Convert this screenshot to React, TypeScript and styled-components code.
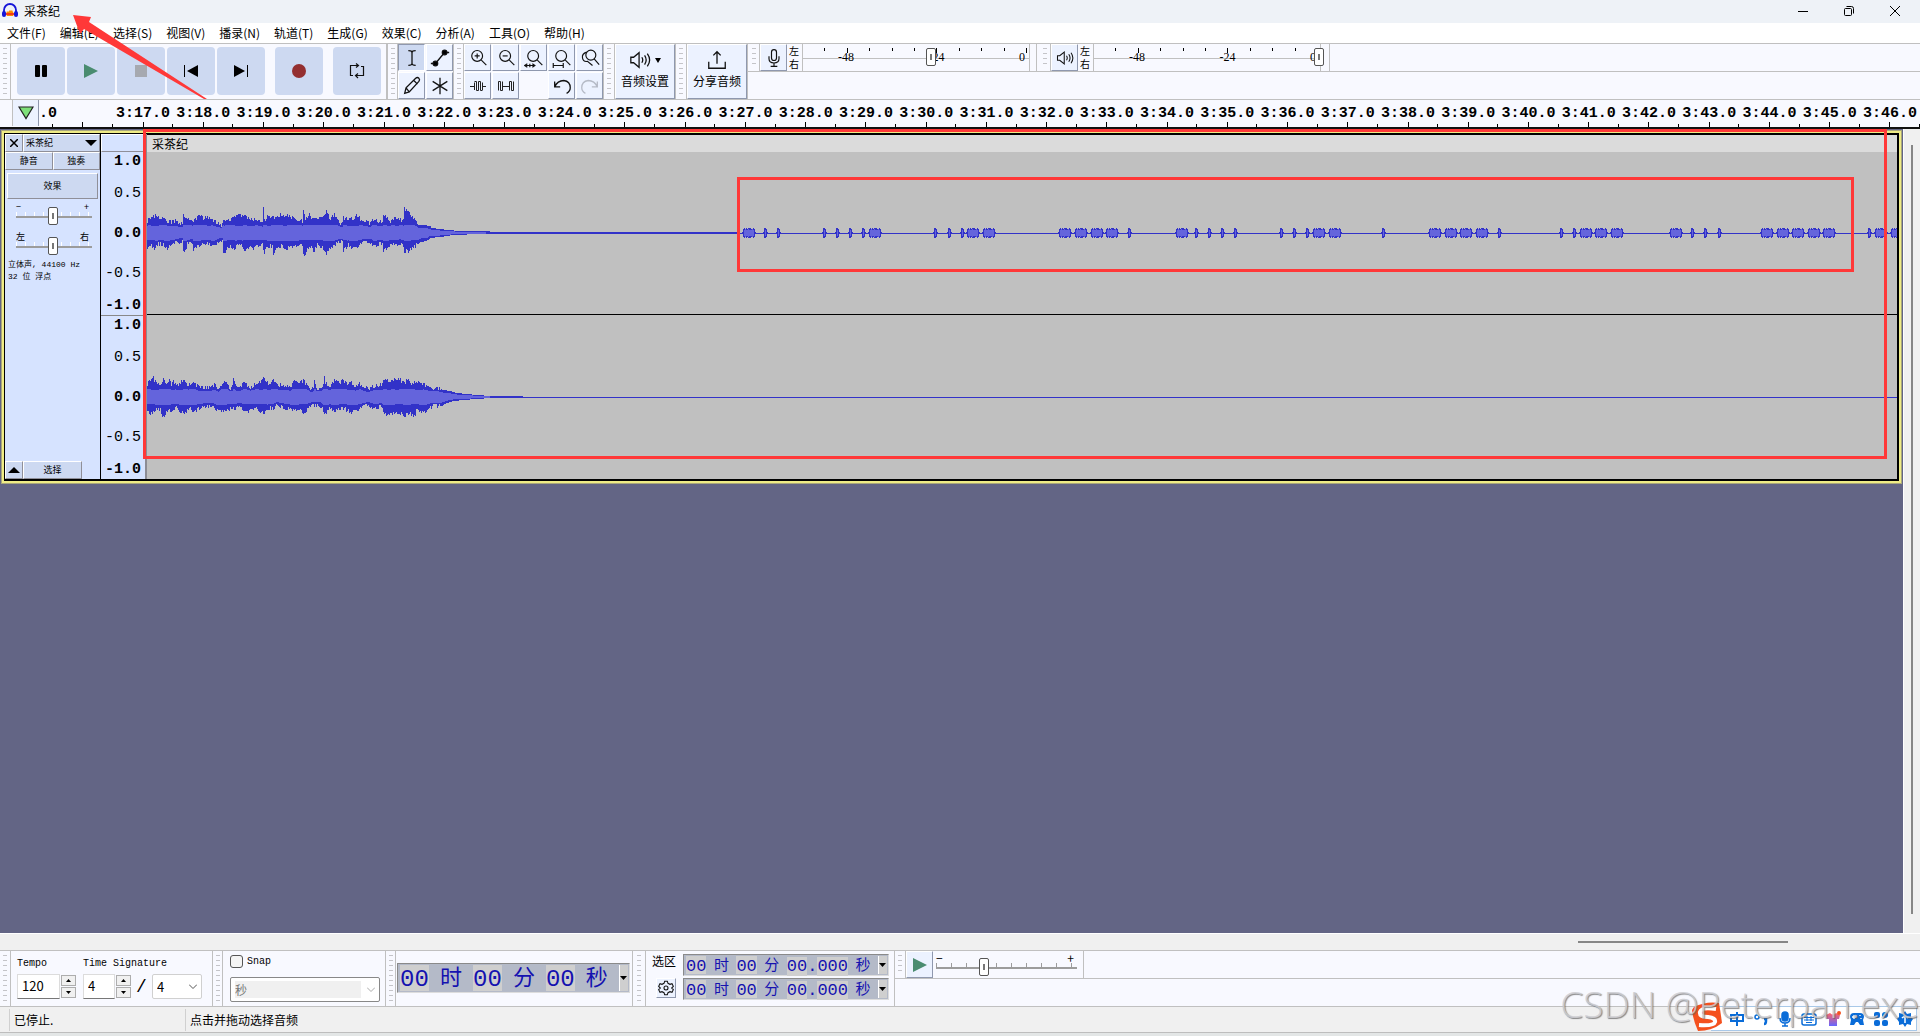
import React from 'react';
import styled, { createGlobalStyle, css } from 'styled-components';

const ui = "'Noto Sans CJK SC', sans-serif";
const mono = "'Liberation Mono', 'Noto Sans CJK SC', monospace";
const line = '#c0c0c0';
const surface = '#f8f9ff';
const red = '#ff3838';

const Global = createGlobalStyle`
  *, *::before, *::after { box-sizing: border-box; }
  body { margin: 0; overflow: hidden; background: #f0f0f0; }
  button, input, select { font: inherit; color: inherit; margin: 0; padding: 0; border: 0; border-radius: 0; }
`;

const Page = styled.div`
  position: relative;
  display: flex;
  flex-direction: column;
  height: 100vh;
  font: 12px/16px ${ui};
  color: #000;
`;

/* ---------- title and menus ---------- */
const TitleBar = styled.header`
  display: flex;
  align-items: center;
  gap: 6px;
  height: 23px;
  padding: 0 2px 2px;
  background: #eef2f7;
`;
const Title = styled.h1`
  flex: 1;
  margin: 0;
  font: 12px/16px ${ui};
`;
const WindowButtons = styled.div`
  display: flex;
`;
const WindowButton = styled.button`
  display: grid;
  place-items: center;
  width: 46px;
  height: 20px;
  background: none;
`;
const MenuBar = styled.nav`
  display: flex;
  gap: 14px;
  height: 20px;
  padding-left: 7px;
  background: #fff;
`;
const MenuItem = styled.button`
  background: none;
  line-height: 20px;
`;

/* ---------- toolbars ---------- */
const Dock = styled.div`
  display: flex;
  border-top: 1px solid ${line};
  border-bottom: 1px solid ${line};
  background: ${surface};
`;
const Bar = styled.section<{ $end?: number }>`
  display: flex;
  border-right: ${(p) => p.$end ?? 1}px solid ${line};
`;
const Grip = styled.div<{ $w?: number }>`
  flex: none;
  width: ${(p) => p.$w ?? 10}px;
  border-right: 1px solid ${line};
  background: repeating-linear-gradient(#c4c4c8 0 1px, transparent 1px 5px) center / 4px calc(100% - 8px) no-repeat;
`;
const Transport = styled.div`
  display: flex;
  gap: 10px;
  padding: 3px 5px 4px 6px;
`;
const Group = styled.div`
  display: flex;
  gap: 2px;
`;
const SoundMark = styled(Group)`
  gap: 4px;
`;
const BigButton = styled.button`
  display: grid;
  place-items: center;
  width: 48px;
  height: 48px;
  border-radius: 4px;
  background: #cdd9f1;
`;
const ToolGrid = styled.div<{ $cols: number }>`
  display: grid;
  grid-template-columns: repeat(${(p) => p.$cols}, 27px);
  grid-auto-rows: 27px;
  gap: 1px;
`;
const raised = css`
  background: #ecf2ff;
  border: 1px solid #fff;
  border-right: 1px solid #8f98ae;
  border-bottom: 1px solid #8f98ae;
`;
const ToolButton = styled.button<{ $on?: boolean }>`
  display: grid;
  place-items: center;
  width: 27px;
  height: 27px;
  ${raised}
  ${(p) => p.$on && 'background: #cdd9f1; border-color: #8f98ae #fff #fff #8f98ae;'}
`;
const TallButton = styled.button`
  display: flex;
  flex-direction: column;
  align-items: center;
  gap: 2px;
  width: 60px;
  height: 55px;
  padding-top: 4px;
  ${raised}
`;
const SideDock = styled.div`
  flex: 1;
`;
const SideRow = styled.div`
  display: flex;
  gap: 2px;
  height: 28px;
  border-bottom: 1px solid ${line};
`;
const Channels = styled.div`
  display: flex;
  flex-direction: column;
  width: 15px;
  padding-left: 2px;
  font: 10px/13px ${ui};
`;
const MeterScale = styled.div<{ $pad: number }>`
  position: relative;
  width: 228px;
  margin-right: ${(p) => p.$pad}px;
  border-left: 1px solid ${line};
  border-right: 1px solid ${line};
`;
const MeterTicks = styled.div`
  display: grid;
  grid-template-columns: repeat(10, 1fr);
  height: 15px;
  padding: 4px 2px 0 0;
  border-bottom: 1px solid ${line};
`;
const MeterTick = styled.i<{ $major: boolean }>`
  height: ${(p) => (p.$major ? 5 : 3)}px;
  border-right: 1px solid #000;
`;
const MeterLabels = styled.div`
  position: absolute;
  inset: 5px 0 auto 35px;
  display: flex;
  justify-content: space-between;
  padding-right: 4px;
  font: 12px/16px 'Liberation Serif', serif;
`;
const MeterRange = styled.input`
  position: absolute;
  inset: 4px auto auto 0;
  width: calc(100% + 4px);
  height: 18px;
  appearance: none;
  background: none;
  &::-webkit-slider-thumb {
    appearance: none;
    width: 10px;
    height: 18px;
    border: 1px solid #555;
    border-radius: 2px;
    background: linear-gradient(#777, #777) center / 2px 6px no-repeat #fff;
  }
`;

/* ---------- timeline ---------- */
const Timeline = styled.div`
  display: flex;
  height: 29px;
  background: ${surface};
  border-bottom: 2px solid #111;
`;
const TimelineHead = styled.div`
  display: flex;
  width: 113px;
  font: bold 15px/27px ${mono};
  background:
    linear-gradient(#000, #000) 52px 100% / 1px 3px no-repeat,
    linear-gradient(#000, #000) 82px 100% / 1px 5px no-repeat,
    linear-gradient(#000, #000) 112px 100% / 1px 3px no-repeat;
`;
const PinButton = styled.button`
  display: grid;
  place-items: center;
  width: 27px;
  height: 26px;
  margin-left: 12px;
  background: #ecf2ff;
  border-left: 1px solid ${line};
  border-right: 1px solid #8f98ae;
`;
const Second = styled.div`
  flex: 1;
  display: flex;
  justify-content: center;
  font: bold 15px/27px ${mono};
  background:
    linear-gradient(#000, #000) 50% 100% / 1px 5px no-repeat,
    linear-gradient(#000, #000) 100% 100% / 1px 3px no-repeat;
`;

/* ---------- track area ---------- */
const Workspace = styled.main`
  flex: 1;
  display: flex;
  min-height: 0;
`;
const TrackArea = styled.div`
  flex: 1;
  min-width: 0;
  padding: 1px;
  background: #636585;
`;
const VScroll = styled.div`
  width: 17px;
  padding: 16px 0 19px 7px;
  border-left: 1px solid #fff;
`;
const VThumb = styled.div`
  width: 2px;
  height: 100%;
  background: #868686;
`;
const HScroll = styled.div`
  height: 17px;
  padding: 7px 132px 0 0;
  border-top: 1px solid #fff;
`;
const HThumb = styled.div`
  width: 210px;
  height: 2px;
  margin-left: auto;
  background: #868686;
`;
const TrackFrame = styled.article`
  border: 1px solid #a9a77c;
  padding: 2px;
  background: #efec85;
`;
const Track = styled.div`
  display: flex;
  height: 348px;
  border: 1px solid #000;
  border-right-width: 2px;
  border-bottom-width: 2px;
  background: #d6e3ff;
`;
const Panel = styled.aside`
  display: flex;
  flex-direction: column;
  width: 96px;
  border-right: 1px solid #000;
  font: 9px/12px ${ui};
`;
const PanelRow = styled.div`
  display: flex;
  height: 18px;
`;
const PanelButton = styled.button<{ $w?: number }>`
  display: flex;
  align-items: center;
  justify-content: center;
  ${(p) => (p.$w ? `width: ${p.$w}px;` : 'flex: 1;')}
  height: 18px;
  background: #cdd9f1;
  border: 1px solid #fff;
  border-right-color: #8f8f98;
  border-bottom-color: #8f8f98;
`;
const NameButton = styled(PanelButton)`
  justify-content: space-between;
  padding: 0 2px;
`;
const EffectsButton = styled(PanelButton)`
  flex: none;
  height: 26px;
  margin: 3px 2px 4px;
`;
const SliderBlock = styled.label`
  display: block;
  height: 26px;
  padding: 0 8px 0 11px;
  & + & { margin-top: 4px; }
`;
const SliderEnds = styled.span`
  display: flex;
  justify-content: space-between;
  height: 4px;
  padding: 0 3px 0 0;
  line-height: 8px;
`;
const Slider = styled.input<{ $h?: number }>`
  display: block;
  width: 100%;
  height: 18px;
  appearance: none;
  background:
    linear-gradient(#9c9c9c, #9c9c9c) 0 9px / 100% 2px no-repeat,
    repeating-linear-gradient(90deg, ${(p) => (p.$h ? '#9c9c9c' : '#fff')} 0 1px, transparent 1px ${(p) => (p.$h ? 15 : 9)}px) 0 5px / 100% 4px no-repeat;
  &::-webkit-slider-thumb {
    appearance: none;
    width: 10px;
    height: 18px;
    border: 1px solid #555;
    border-radius: 2px;
    background: linear-gradient(#777, #777) center / 2px 6px no-repeat #fff;
  }
`;
const TrackInfo = styled.p`
  flex: 1;
  margin: 0;
  padding: 0 3px;
  font: 8px/12px ${mono};
  white-space: pre-line;
`;
const LevelRuler = styled.div`
  display: flex;
  flex-direction: column;
  width: 46px;
  border-right: 2px solid #8c8c94;
`;
const RulerHead = styled.div`
  height: 18px;
  border: 1px solid #fff;
  border-bottom-color: #8f8f98;
`;
const Scale = styled.ol`
  display: grid;
  grid-template-rows: 18px 46px 34px 46px 18px;
  align-items: center;
  justify-items: end;
  margin: 0;
  padding: 1px 4px 0 0;
  list-style: none;
  font: 15px/18px ${mono};
  & + & { border-top: 1px solid #888; }
`;
const Level = styled.li<{ $bold: boolean }>`
  font-weight: ${(p) => (p.$bold ? 700 : 400)};
`;
const Clip = styled.div`
  flex: 1;
  min-width: 0;
  display: flex;
  flex-direction: column;
  background: #c0c0c0;
`;
const ClipHead = styled.div`
  height: 18px;
  padding-left: 5px;
  border-top: 1px solid #000;
  background: #dbdbdb;
  font: 12px/18px ${ui};
`;
const Wave = styled.svg`
  display: block;
  width: 100%;
  height: 162px;
  & + & { border-top: 1px solid #000; height: 165px; }
`;

/* ---------- lower toolbars ---------- */
const Tempo = styled.div`
  display: grid;
  grid-template-columns: auto auto;
  grid-template-rows: 23px 25px;
  column-gap: 7px;
  padding: 0 10px 7px 6px;
`;
const SmallLabel = styled.label`
  font: 10px/26px ${mono};
`;
const Fields = styled.div`
  display: flex;
  gap: 1px;
`;
const Num = styled.input<{ $w: number }>`
  width: ${(p) => p.$w}px;
  height: 25px;
  padding: 0 0 2px 4px;
  border: 1px solid #dcdcdc;
  border-bottom-color: #777;
  background: #fff;
  font-size: 13px;
`;
const Spin = styled.div`
  display: grid;
  grid-template-rows: 11px 11px;
  gap: 1px;
  padding-top: 1px;
`;
const SpinButton = styled.button`
  display: grid;
  place-items: center;
  width: 15px;
  background: #f0f0f0;
  border: 1px solid #adadad;
`;
const Slash = styled.span`
  width: 19px;
  font: 18px/26px ${mono};
  text-align: center;
`;
const SelectBox = styled.div`
  position: relative;
  display: flex;
`;
const Chevron = styled.svg`
  position: absolute;
  right: 5px;
  top: 10px;
  pointer-events: none;
`;
const SigSelect = styled.select`
  width: 50px;
  height: 25px;
  padding-left: 4px;
  border: 1px solid #d0d0d0;
  border-radius: 2px;
  appearance: none;
  background: #fff;
  font-size: 13px;
`;
const Snap = styled.div`
  padding: 4px 5px 0 7px;
`;
const SnapLabel = styled.label`
  display: flex;
  align-items: center;
  gap: 4px;
  height: 13px;
  margin-bottom: 9px;
  font: 10px/13px ${mono};
`;
const Check = styled.input`
  appearance: none;
  width: 13px;
  height: 13px;
  border: 1px solid #555 !important;
  border-radius: 3px !important;
  background: #f4f4f4;
`;
const SnapSelect = styled.select`
  width: 150px;
  height: 25px;
  padding-left: 4px;
  border: 1px solid #888 !important;
  border-radius: 2px;
  appearance: none;
  background: linear-gradient(#f0f0f0, #f0f0f0) 4px center / 126px 17px no-repeat #fff;
  color: #777 !important;
  opacity: 1 !important;
`;
const TimeBox = styled.div<{ $big?: boolean }>`
  display: flex;
  align-items: stretch;
  justify-content: space-between;
  width: ${(p) => (p.$big ? 233 : 206)}px;
  height: ${(p) => (p.$big ? 30 : 22)}px;
  padding: 1px 1px 1px 2px;
  border: 1px solid #8a8a8a;
  border-right-color: #ddd;
  border-bottom-color: #ddd;
  background: #b4bac8;
  color: #1512b0;
  font: ${(p) => (p.$big ? '24px/30px' : '17px/21px')} ${mono};
`;
const Digits = styled.span`
  background: #cfcfcf;
`;
const Unit = styled.span<{ $big?: boolean }>`
  font-size: ${(p) => (p.$big ? 22 : 15)}px;
`;
const Drop = styled.button`
  display: grid;
  place-items: center;
  width: 9px;
  background: #cfcfcf;
  border-left: 1px solid #fff;
`;
const BigTime = styled.div`
  padding: 12px 2px 0 1px;
`;
const Selection = styled.div`
  display: grid;
  grid-template-columns: 31px 206px;
  grid-template-rows: 22px 22px;
  row-gap: 2px;
  padding: 3px 5px 0 6px;
  line-height: 14px;
`;
const GearButton = styled.button`
  display: grid;
  place-items: center;
  width: 20px;
  height: 20px;
  margin-left: 4px;
  ${raised}
`;
const PlaySpeed = styled.label`
  display: block;
  width: 150px;
  padding: 3px 6px 0 3px;
`;
const Status = styled.footer`
  display: flex;
  height: 25px;
  margin-top: 1px;
  padding: 1px 0 1px 9px;
  border-bottom: 1px solid #bdbdbd;
  background: #f0f0f0;
  line-height: 22px;
`;
const StatusCell = styled.div<{ $w?: number }>`
  ${(p) => (p.$w ? `width: ${p.$w}px;` : 'flex: 1;')}
  padding-left: 4px;
  border-left: 1px solid #d0d0d0;
`;
const Below = styled.div`
  height: 3px;
  background: #e3e6e6;
`;

/* ---------- things lying over the window ---------- */
const RedBox = styled.div<{ $t: number; $l: number; $r: number; $h: number }>`
  position: absolute;
  top: ${(p) => p.$t}px;
  left: ${(p) => p.$l}px;
  right: ${(p) => p.$r}px;
  height: ${(p) => p.$h}px;
  border: 3px solid ${red};
  pointer-events: none;
`;
const Arrow = styled.svg`
  position: absolute;
  top: 0;
  left: 0;
  pointer-events: none;
`;
const Watermark = styled.div`
  position: absolute;
  right: 1px;
  bottom: 10px;
  font: 37px/44px 'Open Sans', sans-serif;
  font-weight: 300;
  color: rgba(205, 205, 210, 0.85);
  text-shadow: 1px 1px 1px rgba(90, 90, 90, 0.7);
  white-space: nowrap;
  pointer-events: none;
`;
const Ime = styled.div`
  position: absolute;
  right: 3px;
  bottom: 5px;
  display: flex;
  align-items: center;
  gap: 8px;
  height: 25px;
  padding-right: 3px;
  border: 1px solid #a8c8e8;
  border-left: 0;
  background: #fff;
`;
const ImeLogo = styled.svg`
  margin: -4px -2px 0 -20px;
`;

const Svg = ({ s = 22, children, w = 1.4 }: { s?: number; w?: number; children: React.ReactNode }) => (
  <svg width={s} height={s} viewBox="0 0 24 24" fill="none" stroke="#111" strokeWidth={w} aria-hidden>
    {children}
  </svg>
);
const Tri = ({ up, w = 6, h = 4 }: { up?: boolean; w?: number; h?: number }) => (
  <svg width={w} height={h} viewBox="0 0 6 4" preserveAspectRatio="none" aria-hidden>
    <path d={up ? 'M0 4L3 0L6 4Z' : 'M0 0L3 4L6 0Z'} />
  </svg>
);
const Down = ({ c }: { c: string }) => (
  <Chevron width="8" height="6" fill="none" stroke={c} aria-hidden><path d="M0 .5l4 4 4-4" /></Chevron>
);

const lens = <><circle cx="11" cy="9.5" r="6.5" /><path d="M16 14.5l6 6" /></>;
const speaker = <><path d="M2 9v6h3l6 5V4L5 9z" /><path d="M14 9q2 3 0 6M17 7q3.5 5 0 10M20 5q5 7 0 14" /></>;

const menus = ['文件(F)', '编辑(E)', '选择(S)', '视图(V)', '播录(N)', '轨道(T)', '生成(G)', '效果(C)', '分析(A)', '工具(O)', '帮助(H)'];
const seconds = Array.from({ length: 30 }, (_, i) => `3:${17 + i}.0`);
const levels = ['1.0', '0.5', '0.0', '-0.5', '-1.0'];

/* Envelope points: position (thirds of a pixel) and height of the peak in pixels. */
const parse = (s: string) => s.split(' ').map((p) => p.split(':').map(Number));
const up1 = parse('22:12 30:14 45:17 60:15 75:13 90:11 105:12 120:9 127:10 129:20 135:16 150:15 158:11 163:14 180:17 190:14 200:16 215:13 230:10 245:8 249:16 252:12 265:13 280:15 295:18 310:17 325:16 340:14 355:12 367:10 370:24 373:13 385:17 400:15 420:18 440:18 455:16 470:13 487:12 490:21 495:15 504:15 507:21 515:14 530:16 545:16 555:20 563:22 570:14 583:18 590:13 600:10 607:9 610:17 615:14 630:13 640:15 650:19 660:14 675:11 690:10 703:15 710:12 727:11 730:19 740:15 752:12 765:16 780:13 790:12 793:26 798:22 806:21 815:16 825:14 830:11 835:8 850:8 870:7 875:5 900:4 925:3 960:2 1000:2 1040:2 1060:1');
const down1 = parse('22:17 30:11 42:17 55:11 65:11 75:13 85:16 90:12 100:11 115:9 127:8 130:17 135:18 142:11 157:10 160:17 170:13 185:12 200:11 220:13 235:9 247:8 250:19 253:21 262:14 270:13 280:17 290:12 305:11 315:18 325:14 340:17 350:13 367:12 372:21 380:13 397:13 400:20 410:15 425:13 440:15 455:14 470:14 487:12 492:24 500:16 515:14 520:20 530:12 545:13 553:18 560:20 572:15 585:12 600:9 607:9 610:17 615:16 625:12 643:16 655:12 670:10 690:9 705:14 715:11 727:11 730:19 735:17 750:11 765:12 780:10 790:12 793:18 806:18 815:15 830:12 840:9 860:8 870:5 900:4 940:2 960:2 1000:1 1060:1');
const up2 = parse('22:13 40:19 50:13 67:13 70:18 75:13 87:17 95:12 101:16 110:10 120:14 133:18 145:11 148:16 155:12 160:16 165:13 180:9 205:9 225:12 235:8 249:16 260:14 270:9 277:10 280:18 290:9 300:9 310:15 330:10 345:12 360:14 370:18 376:18 385:12 402:17 415:12 430:12 450:10 463:16 480:15 490:16 500:13 510:8 520:9 523:17 530:9 545:9 550:14 553:22 556:14 570:11 583:16 595:14 610:17 620:13 640:14 645:10 655:14 670:10 685:8 700:11 725:12 730:18 745:16 765:18 778:18 790:14 805:17 815:12 823:15 840:14 860:11 875:9 895:9 910:7 930:6 950:4 980:3 1010:2 1050:1 1150:1');
const down2 = parse('22:15 38:17 50:12 62:13 70:21 80:13 95:15 110:11 120:14 135:15 150:12 162:15 175:11 200:10 215:9 230:13 250:14 265:12 280:12 300:9 315:14 330:14 350:12 370:17 385:11 400:11 410:8 425:10 450:12 465:14 480:14 493:16 505:10 520:8 545:9 553:17 570:11 583:15 600:12 610:11 630:15 640:15 655:12 685:8 705:12 725:9 733:19 745:16 765:17 775:15 795:18 810:16 823:20 830:13 853:16 865:11 880:9 905:9 920:6 940:4 970:3 1010:2 1050:1 1150:1');

const at = (pts: number[][], x: number) => {
  const i = pts.findIndex((p) => p[0] >= x);
  if (i < 0) return pts[pts.length - 1][1];
  if (i === 0) return pts[0][1];
  const [a, b] = [pts[i - 1], pts[i]];
  return a[1] + ((b[1] - a[1]) * (x - a[0])) / (b[0] - a[0]);
};
const jag = (i: number) => Math.floor(Math.abs(Math.sin(i * 12.9898) * 43758.5453) % 5) - 2;

/* One filled column per pixel; the first column sits at the clip's left edge. */
const columns = (up: number[][], down: number[][], mid: number, end: number, inner: boolean) => {
  let d = '';
  for (let x = 22, i = 0; x < end; x += 3, i += 1) {
    let u = at(up, x);
    let l = at(down, x);
    if (inner) {
      u = Math.min(8 - (jag(i >> 2) > 1 ? 1 : 0), u * 0.62);
      l = Math.min(7 + (jag(i >> 3) > 0 ? 1 : 0), l * 0.62);
    } else if (u > 8) {
      u += jag(i) * 0.9;
      l += jag(i + 501) * 0.9;
    }
    u = Math.round(u);
    l = Math.round(l);
    d += `M${i} ${mid - u}h1v${u + l}h-1z`;
  }
  return d;
};

/* Short noises after the song has ended: x in the window. */
const wide = [743, 869, 967, 983, 1059, 1075, 1091, 1106, 1176, 1313, 1329, 1429, 1445, 1460, 1476, 1580, 1595, 1611, 1670, 1761, 1777, 1792, 1808, 1823, 1875, 1891];
const thin = [765, 778, 824, 837, 850, 863, 935, 949, 962, 1129, 1196, 1209, 1222, 1235, 1281, 1294, 1307, 1383, 1499, 1561, 1574, 1692, 1705, 1719, 1869];
const X0 = 147;

const TimeField = ({ big, label }: { big?: boolean; label: string }) => (
  <TimeBox $big={big} role="group" aria-label={label}>
    <Digits>00</Digits><Unit $big={big}>时</Unit>
    <Digits>00</Digits><Unit $big={big}>分</Unit>
    {big ? <Digits>00</Digits> : <span><Digits>00</Digits>.<Digits>000</Digits></span>}
    <Unit $big={big}>秒</Unit>
    <Drop aria-label="格式"><Tri w={7} /></Drop>
  </TimeBox>
);

const Meter = ({ value, icon, label, grip, pad }: { value: number; icon: React.ReactNode; label: string; grip: number; pad: number }) => (
  <Bar>
    <Grip $w={grip} />
    <ToolButton aria-label={label}>{icon}</ToolButton>
    <Channels><span>左</span><span>右</span></Channels>
    <MeterScale $pad={pad}>
      <MeterTicks>{Array.from({ length: 10 }, (_, i) => <MeterTick key={i} $major={i % 4 === 1} />)}</MeterTicks>
      <MeterLabels><span>-48</span><span>-24</span><span>0</span></MeterLabels>
      <MeterRange type="range" defaultValue={value} aria-label={label} />
    </MeterScale>
  </Bar>
);

const Spinner = () => (
  <Spin>
    <SpinButton aria-label="增加"><Tri up w={5} h={3} /></SpinButton>
    <SpinButton aria-label="减少"><Tri w={5} h={3} /></SpinButton>
  </Spin>
);

export default function App() {
  return (
    <Page>
      <Global />
      <TitleBar>
        <svg width="16" height="16" viewBox="0 0 16 16" aria-hidden>
          <path d="M4 11l1-3 1 1 2-2 1 1 1-1 2 4-1 2H5z" fill="#ff8a00" />
          <path d="M4 11h8" stroke="#e22" strokeWidth="1.5" />
          <path d="M2 10V7a6 6 0 0 1 12 0v3" fill="none" stroke="#1616d8" strokeWidth="1.8" />
          <rect x="0" y="8" width="4" height="6" rx="2" fill="#1616d8" /><rect x="12" y="8" width="4" height="6" rx="2" fill="#1616d8" />
        </svg>
        <Title>采茶纪</Title>
        <WindowButtons>
          <WindowButton aria-label="最小化"><svg width="10" height="10"><path d="M0 5.5h10" stroke="#000" /></svg></WindowButton>
          <WindowButton aria-label="还原"><svg width="10" height="10" fill="none" stroke="#000"><rect x=".5" y="2.5" width="7" height="7" rx="1" /><path d="M2.5.5h5a2 2 0 0 1 2 2v5" /></svg></WindowButton>
          <WindowButton aria-label="关闭"><svg width="10" height="10"><path d="M0 0l10 10M10 0L0 10" stroke="#000" /></svg></WindowButton>
        </WindowButtons>
      </TitleBar>
      <MenuBar>{menus.map((m) => <MenuItem key={m}>{m}</MenuItem>)}</MenuBar>

      <Dock>
        <Bar $end={2}>
          <Grip $w={11} />
          <Transport>
            <Group>
              <BigButton aria-label="暂停"><svg width="12" height="12"><rect width="5" height="12" rx="1" /><rect x="7" width="5" height="12" rx="1" /></svg></BigButton>
              <BigButton aria-label="播放"><svg width="14" height="14"><path d="M0 0l14 7-14 7z" fill="#4a8c70" /></svg></BigButton>
              <BigButton aria-label="停止"><svg width="12" height="12"><rect width="12" height="12" fill="#a6a9b0" /></svg></BigButton>
              <BigButton aria-label="跳至开头"><svg width="14" height="12"><path d="M.5 0v12" stroke="#000" /><path d="M14 0v12L3 6z" /></svg></BigButton>
              <BigButton aria-label="跳至结尾"><svg width="14" height="12"><path d="M13.5 0v12" stroke="#000" /><path d="M0 0v12l11-6z" /></svg></BigButton>
            </Group>
            <BigButton aria-label="录制"><svg width="14" height="14"><circle cx="7" cy="7" r="7" fill="#942f30" /></svg></BigButton>
            <BigButton aria-label="循环"><svg width="16" height="16" fill="none" stroke="#111" strokeWidth="1.2"><path d="M4 12.5H1.5V2.5h8M7 .5l2.5 2L7 4.5M12 3.5h2.500v9h-8M9 10.500l-2.500 2 2.500 2.500" /></svg></BigButton>
          </Transport>
        </Bar>
        <Bar>
          <Grip />
          <ToolGrid $cols={2}>
            <ToolButton $on aria-label="选择工具"><Svg><path d="M8 4q4 0 4 2q0-2 4-2M12 5v14M8 20q4 0 4-2q0 2 4 2" /></Svg></ToolButton>
            <ToolButton aria-label="包络工具"><Svg><path d="M2 18h5L17 6h5" /><circle cx="7" cy="18" r="2.5" fill="#000" /><circle cx="17" cy="6" r="2.5" fill="#000" /></Svg></ToolButton>
            <ToolButton aria-label="绘制工具"><Svg><path d="M4 20l1.500-6L16 3.500q2-1.500 3.500 0t0 3.500L9 18.500zM14 6l4 4M5.500 14l3.500 4.500" /></Svg></ToolButton>
            <ToolButton aria-label="多功能工具"><Svg><path d="M12 3v18M4 7l16 10M20 7L4 17" /></Svg></ToolButton>
          </ToolGrid>
        </Bar>
        <Bar>
          <Grip />
          <ToolGrid $cols={5}>
            <ToolButton aria-label="放大"><Svg s={20}>{lens}<path d="M8 9.500h6M11 6.500v6" /></Svg></ToolButton>
            <ToolButton aria-label="缩小"><Svg s={20}>{lens}<path d="M8 9.500h6" /></Svg></ToolButton>
            <ToolButton aria-label="缩放到选区"><Svg s={20}>{lens}<path d="M1 21h12M4 19l-3 2 3 2M10 19l3 2-3 2M7 19v4" /></Svg></ToolButton>
            <ToolButton aria-label="适应项目"><Svg s={20}>{lens}<path d="M1 21h13M1.500 18v6M13.500 18v6" /></Svg></ToolButton>
            <ToolButton aria-label="切换缩放"><Svg s={20}><circle cx="13" cy="8.500" r="6" /><path d="M17 13l6 7M8 5q-6 2-5 7t6 4l6 5" /></Svg></ToolButton>
            <ToolButton aria-label="修剪音频"><svg width="16" height="12" fill="none" stroke="#222"><path d="M0 6.500h4.500M4.500 10V2.500M6.500 1.500v9M8.500 1.500v9M10.500 1.500v9M12.500 2.500V10M12 6.500h4M4.500 1.500h2M6.500 10.500h2M8.500 1.500h2M10.500 10.500h2" /></svg></ToolButton>
            <ToolButton aria-label="静音音频"><svg width="16" height="12" fill="none" stroke="#222"><path d="M.5 10.500v-9h2v9h2v-9M4.500 6.500h7M11.500 10.500v-9h2v9h2v-9" /></svg></ToolButton>
            <span />
            <ToolButton aria-label="撤销"><Svg><path d="M4 7v6h6M4 13q3-7 10-7 7 1 7 8 0 4-4 6" /></Svg></ToolButton>
            <ToolButton aria-label="重做"><svg width="22" height="22" viewBox="0 0 24 24" fill="none" stroke="#b5bac6" strokeWidth="1.4"><path d="M20 7v6h-6M20 13q-3-7-10-7-7 1-7 8 0 4 4 6" /></svg></ToolButton>
          </ToolGrid>
        </Bar>
        <Bar>
          <Grip $w={11} />
          <TallButton>
            <SoundMark><Svg>{speaker}</Svg><svg width="6" height="22"><path d="M0 9h6l-3 5z" /></svg></SoundMark>
            音频设置
          </TallButton>
        </Bar>
        <Bar>
          <Grip $w={11} />
          <TallButton>
            <Svg><path d="M3 14v7h18v-7M12 16V3M8 7l4-4 4 4" /></Svg>
            分享音频
          </TallButton>
        </Bar>
        <SideDock>
          <SideRow>
            <Meter grip={12} pad={6} value={56} label="录制电平" icon={<Svg s={20}><rect x="9" y="2" width="6" height="13" rx="3" /><path d="M6 10v3q0 5 6 5t6-5v-3M12 18v4M8 22h8" /></Svg>} />
            <Meter grip={12} pad={8} value={100} label="播放电平" icon={<Svg s={18}>{speaker}</Svg>} />
          </SideRow>
        </SideDock>
      </Dock>

      <Timeline>
        <TimelineHead>
          <PinButton aria-label="播放头"><svg width="16" height="14"><path d="M1 1h14L8 12.500z" fill="#7ee07a" stroke="#222" strokeWidth="1.2" /></svg></PinButton>
          .0
        </TimelineHead>
        {seconds.map((s) => <Second key={s}>{s}</Second>)}
      </Timeline>

      <Workspace>
        <TrackArea>
          <TrackFrame>
            <Track>
              <Panel>
                <PanelRow>
                  <PanelButton $w={18} aria-label="关闭轨道"><svg width="8" height="8"><path d="M0 0l8 8M8 0L0 8" stroke="#000" strokeWidth="1.5" /></svg></PanelButton>
                  <NameButton>采茶纪<Tri w={12} h={6} /></NameButton>
                </PanelRow>
                <PanelRow>
                  <PanelButton>静音</PanelButton>
                  <PanelButton>独奏</PanelButton>
                </PanelRow>
                <EffectsButton>效果</EffectsButton>
                <SliderBlock><SliderEnds><span>−</span><span>+</span></SliderEnds><Slider type="range" defaultValue={48} aria-label="增益" /></SliderBlock>
                <SliderBlock><SliderEnds><span>左</span><span>右</span></SliderEnds><Slider type="range" defaultValue={48} aria-label="声像" /></SliderBlock>
                <TrackInfo>{'立体声, 44100 Hz\n32 位 浮点'}</TrackInfo>
                <PanelRow>
                  <PanelButton $w={18} aria-label="折叠"><Tri up w={12} h={6} /></PanelButton>
                  <PanelButton $w={59}>选择</PanelButton>
                </PanelRow>
              </Panel>
              <LevelRuler>
                <RulerHead />
                {[0, 1].map((c) => (
                  <Scale key={c}>{levels.map((l, i) => <Level key={l} $bold={i % 2 === 0}>{l}</Level>)}</Scale>
                ))}
              </LevelRuler>
              <Clip>
                <ClipHead>采茶纪</ClipHead>
                <Wave shapeRendering="crispEdges">
                  <rect x="340" y="80" width="251" height="2" fill="#3232c8" />
                  <rect x="591" y="81" width="100%" height="1" fill="#3232c8" />
                  <path d={columns(up1, down1, 81, 1062, false)} fill="#3232c8" />
                  <path d={columns(up1, down1, 81, 1038, true)} fill="#6464dc" />
                  {wide.map((x) => (
                    <g key={x} transform={`translate(${x - X0} 0)`}>
                      <path d="M0 77h12v8H0zM-1 80h14v2H-1zM1 76h1v10H1zM3 76h1v10H3zM5 76h3v10H5zM10 76h1v10h-1z" fill="#3232c8" />
                      <path d="M1 78h1v-1h1v1h2v-1h1v1h3v-1h1v1h1v6h-1v1h-1v-1H6v1H5v-1H3v1H2v-1H1z" fill="#6464dc" />
                    </g>
                  ))}
                  {thin.map((x) => (
                    <g key={x} transform={`translate(${x - X0} 0)`}>
                      <path d="M-2 80h1v-4h2v1h1v3h1v2H2v3H1v1h-2v-4h-1z" fill="#3232c8" />
                      <rect y="78" width="1" height="6" fill="#6464dc" />
                    </g>
                  ))}
                </Wave>
                <Wave shapeRendering="crispEdges">
                  <rect x="330" y="81" width="46" height="2" fill="#3232c8" />
                  <rect x="376" y="82" width="100%" height="1" fill="#3232c8" />
                  <path d={columns(up2, down2, 82, 1150, false)} fill="#3232c8" />
                  <path d={columns(up2, down2, 82, 1050, true)} fill="#6464dc" />
                </Wave>
              </Clip>
            </Track>
          </TrackFrame>
        </TrackArea>
        <VScroll><VThumb /></VScroll>
      </Workspace>
      <HScroll><HThumb /></HScroll>

      <Dock>
        <Bar>
          <Grip $w={11} />
          <Tempo>
            <SmallLabel htmlFor="tempo">Tempo</SmallLabel>
            <SmallLabel htmlFor="beats">Time Signature</SmallLabel>
            <Fields><Num id="tempo" $w={43} defaultValue="120" /><Spinner /></Fields>
            <Fields>
              <Num id="beats" $w={32} defaultValue="4" /><Spinner />
              <Slash>/</Slash>
              <SelectBox><SigSelect aria-label="拍值"><option>4</option></SigSelect><Down c="#555" /></SelectBox>
            </Fields>
          </Tempo>
        </Bar>
        <Bar>
          <Grip />
          <Snap>
            <SnapLabel><Check type="checkbox" />Snap</SnapLabel>
            <SelectBox><SnapSelect disabled aria-label="吸附单位"><option>秒</option></SnapSelect><Down c="#aaa" /></SelectBox>
          </Snap>
        </Bar>
        <Bar>
          <Grip />
          <BigTime><TimeField big label="时间" /></BigTime>
        </Bar>
        <Bar>
          <Grip $w={13} />
          <Selection>
            <span>选区</span>
            <TimeField label="选区开始" />
            <GearButton aria-label="选区设置"><Svg s={16} w={1.6}><circle cx="12" cy="12" r="3" /><path d="M10 2h4l1 3 3 1.500 3-1 2 4-2.500 2.500 2.500 2.500-2 4-3-1-3 1.500-1 3h-4l-1-3-3-1.500-3 1-2-4L3.500 12 1 9.500l2-4 3 1L9 5z" /></Svg></GearButton>
            <TimeField label="选区结束" />
          </Selection>
        </Bar>
        <SideDock>
          <SideRow>
            <Bar>
              <Grip $w={11} />
              <ToolButton aria-label="以指定速度播放"><svg width="14" height="14"><path d="M0 0l14 7-14 7z" fill="#4a8c70" /></svg></ToolButton>
              <PlaySpeed><SliderEnds><span>−</span><span>+</span></SliderEnds><Slider $h={1} type="range" defaultValue={33} aria-label="播放速度" /></PlaySpeed>
            </Bar>
          </SideRow>
        </SideDock>
      </Dock>
      <Status>
        <StatusCell $w={176}>已停止.</StatusCell>
        <StatusCell>点击并拖动选择音频</StatusCell>
      </Status>
      <Below />

      <RedBox $t={129} $l={143} $r={33} $h={330} />
      <RedBox $t={177} $l={737} $r={66} $h={95} />
      <Arrow width="210" height="102"><path d="M73 15L91 17L89 22L207 99L204 99L84 29L80 34Z" fill={red} /></Arrow>
      <Ime>
        <ImeLogo width="32" height="30" viewBox="0 0 32 30">
          <path d="M3 5q12-6 25-4 2 12 3 20-10 8-24 8Q2 18 1 8z" fill="#f4511e" />
          <path d="M25 7Q10 5 9 10t8 5q8 1 7 5T8 23" fill="none" stroke="#fff" strokeWidth="4" />
        </ImeLogo>
        <svg width="16" height="16" fill="none" stroke="#0a6cd8" strokeWidth="2"><path d="M2 4h12v6H2zM8 1v14" /></svg>
        <svg width="16" height="16" fill="none" stroke="#0a6cd8" strokeWidth="1.5"><circle cx="4" cy="6" r="2" /><path d="M11 8h2v2q0 3-2 3" strokeWidth="2.5" /></svg>
        <svg width="16" height="16" fill="none" stroke="#0a6cd8" strokeWidth="1.5"><rect x="5" y="1" width="6" height="9" rx="3" fill="#0a6cd8" /><path d="M3 7q0 5 5 5t5-5M8 12v3M5 15h6" /></svg>
        <svg width="16" height="16" fill="none" stroke="#0a6cd8" strokeWidth="1.5"><rect x="1" y="3" width="14" height="11" rx="2" /><path d="M3 6.500h10M3 9h10M5 11.500h6M6 5v5M10 5v5" strokeWidth="1" /></svg>
        <svg width="16" height="16"><defs><linearGradient id="shirt" x2="0" y2="1"><stop stopColor="#f66" /><stop offset="1" stopColor="#66f" /></linearGradient></defs><path d="M1 4l4-2q3 3 6 0l4 2-1 4h-2v7H4V8H2z" fill="url(#shirt)" /><circle cx="14" cy="2" r="2" fill="#f4511e" /></svg>
        <svg width="16" height="16" fill="#0a6cd8"><path d="M5 2h6q4 0 4 4l-1 3 1 5h-4l-2-3H7l-2 3H1l1-5-1-3q0-4 4-4z" /><path d="M5 4v4M3 6h4M11 4v1M12 7v1" stroke="#fff" strokeWidth="1.3" /></svg>
        <svg width="16" height="16" fill="#0a6cd8"><rect x="1" y="1" width="6" height="6" rx="2" /><rect x="9" y="1" width="6" height="6" rx="3" /><rect x="1" y="9" width="6" height="6" rx="2" /><rect x="9" y="9" width="6" height="6" rx="2" /></svg>
        <svg width="16" height="16" fill="#0a6cd8"><path d="M8 0l2 3 4-1v4l2 2-2 3v3l-4-1-2 3-2-3-4 1v-3L0 8l2-2V2l4 1z" /><path d="M8 5v7M5 7q3-3 6 0" stroke="#fff" strokeWidth="1.5" fill="none" /></svg>
      </Ime>
      <Watermark>CSDN @Peterpan.exe</Watermark>
    </Page>
  );
}
